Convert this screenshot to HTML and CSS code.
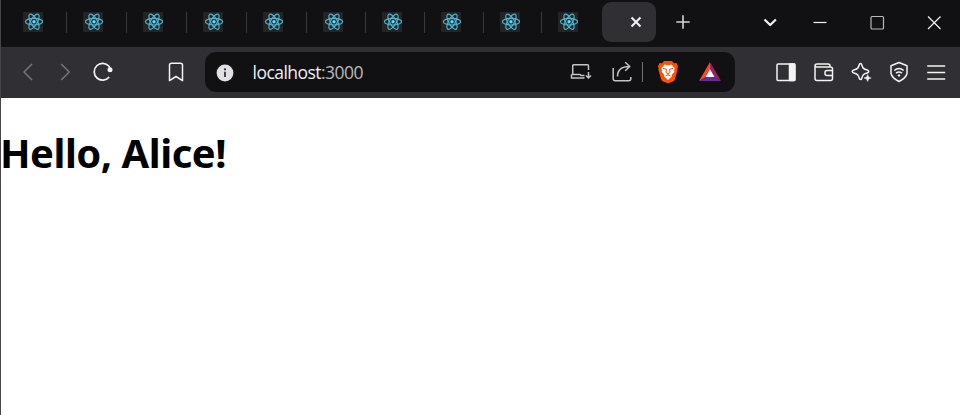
FILE: index.html
```html
<!DOCTYPE html>
<html lang="en">
<head>
<meta charset="utf-8">
<title>localhost:3000</title>
<link rel="stylesheet" href="styles.css">
</head>
<body>
<svg class="defs" aria-hidden="true">
  <symbol id="react" viewBox="0 0 20 20">
    <rect width="20" height="20" rx="1" fill="#222425"/>
    <g fill="none" stroke="#53b6d2" stroke-width="1.150">
      <ellipse cx="11" cy="9.700" rx="8.600" ry="3.300"/>
      <ellipse cx="11" cy="9.700" rx="8.600" ry="3.300" transform="rotate(60 11 9.700)"/>
      <ellipse cx="11" cy="9.700" rx="8.600" ry="3.300" transform="rotate(120 11 9.700)"/>
    </g>
    <circle cx="11" cy="9.700" r="1.700" fill="#61dafb"/>
  </symbol>
</svg>
<div class="window">
  <header class="tabstrip">
    <div class="tabs">
      <div class="tab"><svg><use href="#react"/></svg></div>
      <div class="tab"><svg><use href="#react"/></svg></div>
      <div class="tab"><svg><use href="#react"/></svg></div>
      <div class="tab"><svg><use href="#react"/></svg></div>
      <div class="tab"><svg><use href="#react"/></svg></div>
      <div class="tab"><svg><use href="#react"/></svg></div>
      <div class="tab"><svg><use href="#react"/></svg></div>
      <div class="tab"><svg><use href="#react"/></svg></div>
      <div class="tab"><svg><use href="#react"/></svg></div>
      <div class="tab last"><svg><use href="#react"/></svg></div>
    </div>
    <div class="tab-active"><svg class="close" viewBox="0 0 12 12"><path d="M1.500 1.500l9 9M10.500 1.500l-9 9" stroke-width="2"/></svg></div>
    <div class="newtab"><svg viewBox="0 0 14 14"><path d="M7 .3v13.400M.3 7h13.400" stroke="#d5d3d5" stroke-width="1.600"/></svg></div>
    <div class="controls">
      <svg viewBox="0 0 24 24"><path d="M6.500 9.500l5.700 5.500 5.700-5.500" stroke-width="2.200"/></svg>
      <svg viewBox="0 0 24 24"><path d="M5.500 12.500h13" stroke-width="1.200"/></svg>
      <svg viewBox="0 0 24 24"><rect x="6" y="6.500" width="12.500" height="12.500" rx="1" stroke="#b8b8b8" stroke-width="1.200"/></svg>
      <svg viewBox="0 0 24 24"><path d="M6 6.500l12.500 12.500M18.500 6.500L6 19" stroke-width="1.200"/></svg>
    </div>
  </header>
  <nav class="toolbar">
    <div class="nav">
      <svg class="dim" viewBox="0 0 24 24"><path d="M16 4L8 12l8 8"/></svg>
      <svg class="dim" viewBox="0 0 24 24"><path d="M8.200 4l8 8-8 8"/></svg>
      <svg viewBox="0 0 24 24"><path d="M18.200 17A8.400 8.400 0 1 1 18 6.300l1 2" stroke-width="1.700"/><circle cx="19" cy="9.700" r="2.500" fill="#f3f3f5" stroke="none"/></svg>
    </div>
    <svg class="bookmark" viewBox="0 0 24 24"><path d="M5.500 5.200q0-2 2-2h9q2 0 2 2v15.500L12 16.500l-6.500 4.200z"/></svg>
    <div class="urlbar">
      <svg class="info" viewBox="0 0 18 18"><circle cx="9" cy="9" r="8.400" fill="#e2e0e5" stroke="none"/><path d="M9 7.800v5.200" stroke="#29282c" stroke-width="1.700"/><circle cx="9" cy="5.300" r="1.100" fill="#29282c" stroke="none"/></svg>
      <span class="url"><span class="host">localhost</span>:3000</span>
      <svg class="install" viewBox="0 0 24 24"><path d="M19.500 10V5.700q0-1-1-1H4.700q-1 0-1 1V14M2.500 14.500h8.500l1 1h3.500M2.500 14.500V18h13M19.500 12v5.500M17 15.500l2.500 2.500 2.500-2.500"/></svg>
      <svg class="share" viewBox="0 0 22 24"><path d="M2.200 8v10.800q0 2 2 2h13.600q2 0 2-2V17M6.500 16.500c0-7 4-10 12-10M14.200 2.200l4.600 4.300-4.600 4.300"/></svg>
      <i class="rule"></i>
      <svg class="shield" viewBox="0 0 22 24"><path d="M7 1h8l2 2.200 2.500-.2 1.600 3.500-.8 2.200.3 1-2.600 9.300q-.5 1.500-2 2.500L11 23.300 6 21.500q-1.500-1-2-2.500L1.400 9.700l.3-1L.9 6.500 2.500 3l2.500.2z" fill="#ff5000" stroke="none"/><path d="M7.600 4.500l3.400.7 3.400-.7 3.300 3.700-.6 2.200.2 1.500-2.800 3.200.5 1.200-4 3.700-4-3.700.5-1.200-2.800-3.200.2-1.500-.6-2.200z" fill="#fff" stroke="none"/><path d="M6 8.500l3.500.7-.6 3.200 2.100 1.400 2.100-1.400-.6-3.200 3.500-.7M8.500 16l2.500-1.200 2.500 1.200M11 13.800v1" stroke="#ff5000" stroke-width="1"/></svg>
      <svg class="bat" viewBox="0 0 24 20"><path d="M12 0l11 19-6.500-4L12 7z" fill="#9e1f63"/><path d="M1 19h22l-6.500-4h-9z" fill="#662d91"/><path d="M12 0L1 19l6.500-4L12 7z" fill="#ff4724"/><path d="M12 7l-4.500 8h9z" fill="#fff"/></svg>
    </div>
    <div class="tools">
      <svg viewBox="0 0 24 24"><rect x="3" y="4" width="18" height="16.500" rx="1"/><path d="M15.500 4h5v16.500h-5z" fill="#f3f3f5"/></svg>
      <svg viewBox="0 0 24 24"><path d="M18 7V6q0-2-2-2H5Q3 4 3 6v12.500q0 2 2 2h13.500q2 0 2-2V9q0-2-2-2H5Q3 7 3 5.500M20.500 10.500H15q-2 0-2 2v1q0 2 2 2h5.500"/></svg>
      <svg viewBox="0 0 24 24"><path d="M11.500 3.500q1 0 1.300 1.300c.8 3.200 1.500 4 4.700 5q2.300.8 2.300 1.800t-2.300 1.700c-3.200 1-3.900 1.700-4.700 4.900q-.3 1.300-1.300 1.300t-1.300-1.300c-.8-3.200-1.500-3.900-4.700-4.900Q3.200 12.600 3.200 11.600t2.300-1.800c3.200-1 3.900-1.800 4.700-5q.3-1.300 1.300-1.300z"/><circle cx="18.600" cy="18" r="4" fill="#302f33" stroke="none"/><path d="M18.600 14.500l1 2.500 2.600 1-2.600 1-1 2.500-1-2.500-2.600-1 2.600-1z" fill="#f3f3f5" stroke-width=".5"/></svg>
      <svg viewBox="0 0 24 24"><path d="M12 2.500L4 5.800v7.700q1 4.700 8 8 7-3.300 8-8V5.800zM7.300 10.500q4.700-3.800 9.400 0M9 13.200q3-2.300 6 0"/><circle cx="12" cy="15.400" r="1.200" fill="#f3f3f5" stroke="none"/></svg>
      <svg viewBox="0 0 24 24"><path d="M3.200 6h18M3.200 12.500h18M3.200 19h18"/></svg>
    </div>
  </nav>
  <main><h1>Hello, Alice!</h1></main>
</div>
</body>
</html>
```
FILE: styles.css
```css
* { box-sizing: border-box; }
body { margin: 0; background: #fff; overflow: hidden; }
.defs { display: none; }
.window {
  height: 415px;
  border-left: 1px solid #454548;
}
svg {
  display: block;
  flex: none;
  fill: none;
  stroke: #f3f3f5;
  stroke-width: 1.5;
  stroke-linejoin: round;
}
.tabstrip {
  display: flex;
  height: 47px;
  background: #111113;
}
.tabs {
  display: grid;
  grid-template-columns: repeat(5, 60px) repeat(3, 59px) 58px 60px;
  margin-left: 6px;
  padding-top: 12px;
}
.tab {
  height: 21px;
  padding-left: 16px;
  border-right: 1px solid #39393c;
}
.tab.last { border-right: 0; }
.tab svg { width: 20px; height: 20px; stroke: none; }
.tab-active {
  display: flex;
  align-items: center;
  width: 54px;
  height: 40px;
  margin-top: 2px;
  padding-left: 28px;
  border-radius: 9px;
  background: #302f33;
}
.close { width: 12px; height: 12px; }
.newtab { margin: 15px 0 0 20px; }
.newtab svg { width: 14px; height: 14px; }
.controls {
  display: grid;
  grid-template-columns: 50px 56.5px 57px 24px;
  margin: 10px 0 0 68px;
}
.controls svg { width: 24px; height: 24px; }
.toolbar {
  display: flex;
  align-items: center;
  height: 51px;
  padding-bottom: 1px;
  background: #302f33;
}
.nav, .tools { display: grid; justify-items: center; }
.nav { grid-template-columns: repeat(3, 37.5px); margin-left: 8px; }
.nav svg, .tools svg { width: 24px; height: 24px; }
.nav .dim { stroke: #77767a; }
.bookmark { width: 24px; height: 24px; margin-left: 42px; }
.urlbar {
  display: flex;
  align-items: center;
  width: 530px;
  height: 40px;
  margin-left: 17px;
  padding: 0 13px 0 11px;
  border-radius: 11px;
  background: #111113;
}
.info { width: 18px; height: 18px; margin-top: 1px; }
.url {
  width: 316px;
  margin-left: 19px;
  color: #b9b8bd;
  font: 17.5px/24px "Open Sans", "Noto Sans", sans-serif;
  letter-spacing: -0.53px;
}
.host { color: #f0eff3; }
.install, .share { width: 24px; height: 24px; stroke: #c4c3c7; }
.share { width: 22px; margin-left: 18px; }
.rule { width: 1px; height: 20px; margin-left: 9px; background: #707075; }
.shield { width: 22px; height: 24px; margin-left: 14px; }
.bat { width: 24px; height: 20px; margin-left: 19px; stroke: none; }
.tools { grid-template-columns: repeat(5, 37.5px); margin-left: 33px; }
h1 {
  margin: 28px 0 0 -1px;
  color: #000;
  font: bold 40px/54px "Noto Sans", sans-serif;
  letter-spacing: -0.5px;
}
```
